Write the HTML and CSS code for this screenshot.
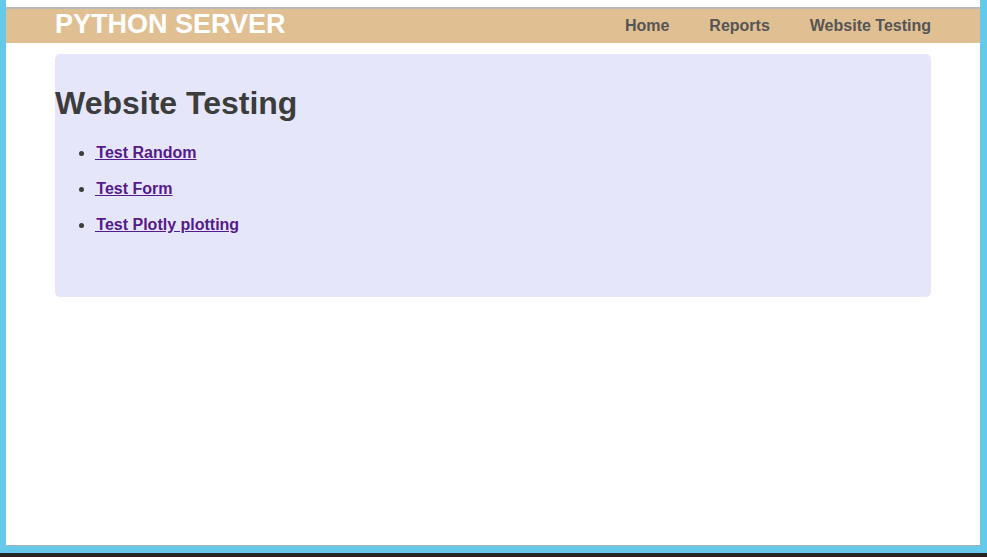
FILE: index.html
```html
<!DOCTYPE html>
<html>
<head>
<meta charset="utf-8">
<title>Website Testing</title>
<link rel="stylesheet" href="styles.css">
</head>
<body>
<div class="frame">
  <div class="window">
    <header class="topbar">
      <div class="container nav">
        <div class="brand">PYTHON SERVER</div>
        <nav class="menu">
          <a class="menu-link" href="#">Home</a>
          <a class="menu-link" href="#">Reports</a>
          <a class="menu-link" href="#">Website Testing</a>
        </nav>
      </div>
    </header>
    <main class="container card">
      <h1 class="title">Website Testing</h1>
      <ul class="tests">
        <li><a class="test-link" href="#">&#8202;Test Random</a></li>
        <li><a class="test-link" href="#">&#8202;Test Form</a></li>
        <li><a class="test-link" href="#">&#8202;Test Plotly plotting</a></li>
      </ul>
    </main>
  </div>
</div>
</body>
</html>
```

FILE: styles.css
```css
html, body {
  margin: 0;
  padding: 0;
}
body {
  background: #242424;
  height: 557px;
  overflow: hidden;
  font-family: "Liberation Sans", Arial, sans-serif;
}
.frame {
  background: #66c9ea;
  height: 553px;
  box-sizing: border-box;
  padding: 0 7px 7px 6px;
}
.window {
  background: #ffffff;
  height: 546px;
  box-sizing: border-box;
  padding-top: 7px;
  border-bottom: 1px solid #a9b4b8;
}
.topbar {
  border-top: 2px solid #b9b9b9;
  background: #e0bf93;
  height: 34px;
}
.container {
  width: 876px;
  margin: 0 auto;
}
.nav {
  display: flex;
  justify-content: space-between;
  align-items: center;
  height: 34px;
}
.brand {
  color: #ffffff;
  font-weight: bold;
  font-size: 27px;
  line-height: 30px;
  margin-top: -4px;
}
.menu {
  display: flex;
  gap: 40px;
}
.menu-link {
  color: #555555;
  font-weight: bold;
  font-size: 16px;
  text-decoration: none;
}
.card {
  margin-top: 11px;
  height: 243px;
  background: #e6e6fa;
  border-radius: 5px;
  padding-top: 31px;
  box-sizing: border-box;
}
.title {
  margin: 0;
  font-size: 32px;
  line-height: 37px;
  color: #3c3c3c;
  font-weight: bold;
}
.tests {
  margin: 22px 0 0;
  padding-left: 40px;
  color: #3c3c3c;
}
.tests li {
  line-height: 18px;
  margin-bottom: 18px;
}
.test-link {
  color: #551a8b;
  font-weight: bold;
  font-size: 16px;
}
```
